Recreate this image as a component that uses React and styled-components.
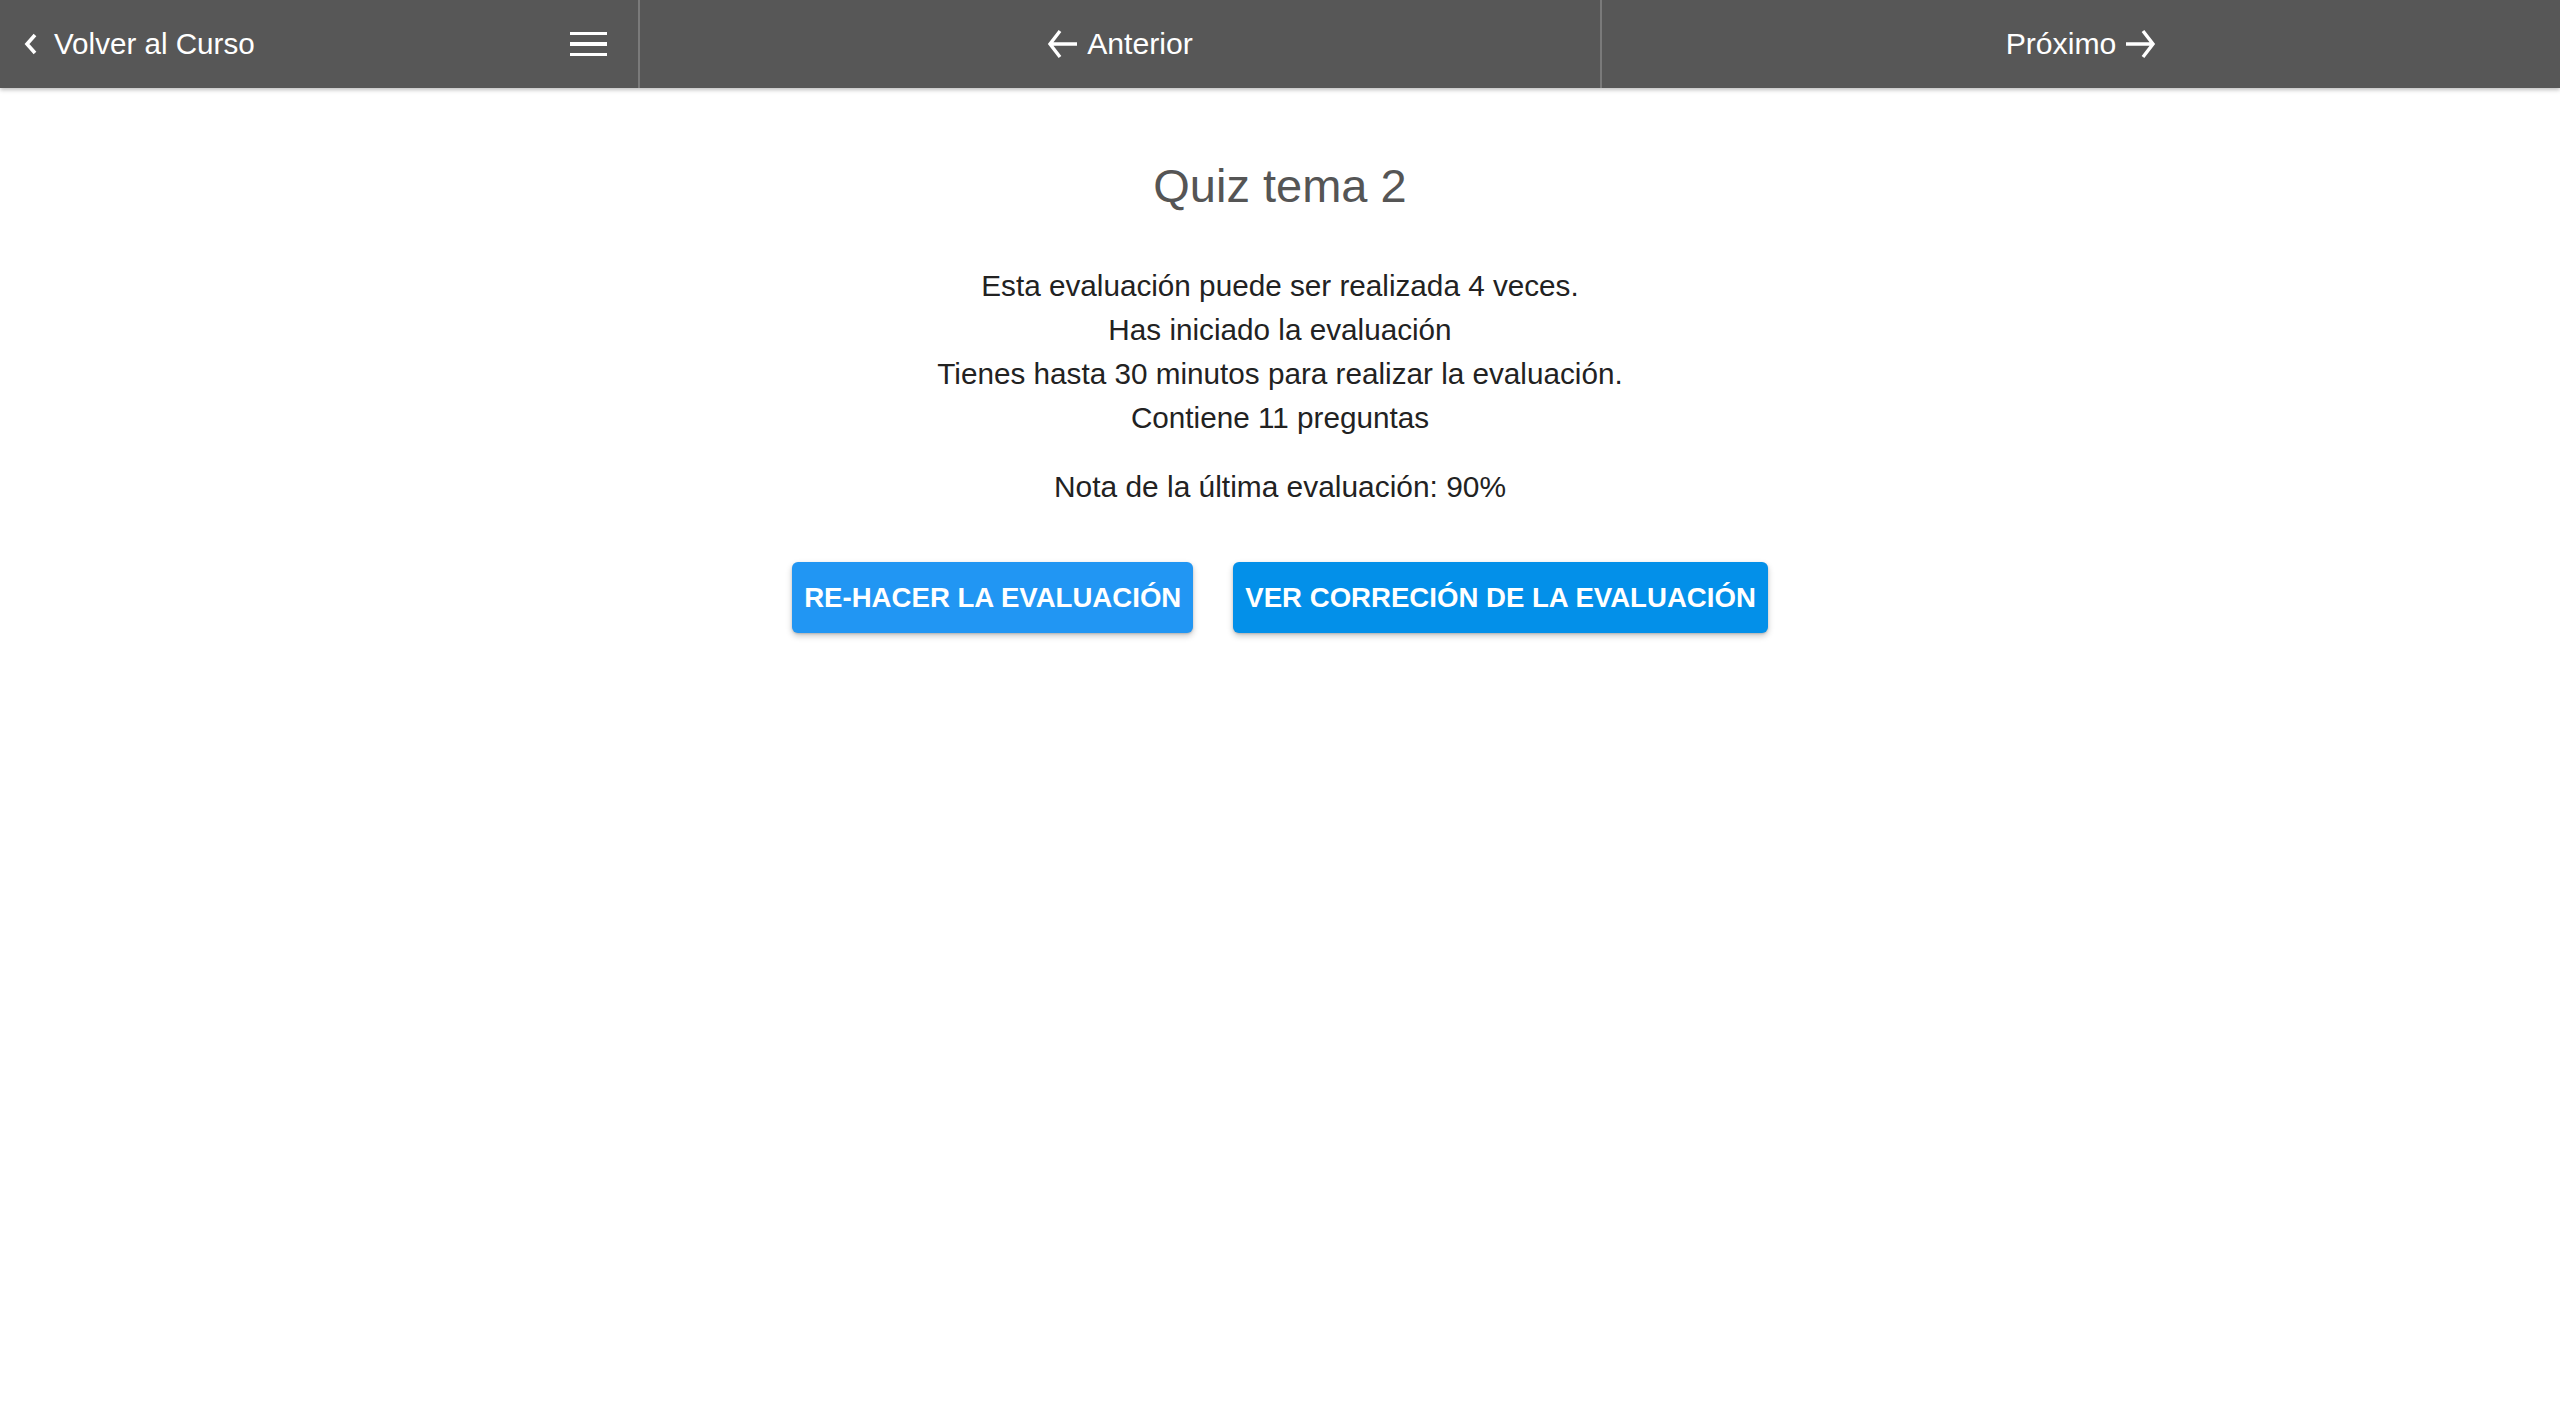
import React from "react";
import styled, { createGlobalStyle } from "styled-components";

const GlobalStyle = createGlobalStyle`
	html, body {
		margin: 0;
		padding: 0;
		background: #ffffff;
		font-family: "Liberation Sans", Arial, sans-serif;
	}
`;

const Page = styled.div`
	min-height: 1416px;
	background: #fff;
`;

const TopBar = styled.nav`
	display: grid;
	grid-template-columns: 638px 962px 1fr;
	height: 88px;
	background: #575757;
	box-shadow: 0 2px 4px rgba(0, 0, 0, 0.25);
	color: #fff;
`;

const NavCell = styled.div`
	display: flex;
	align-items: center;
	justify-content: ${(p) => p.$justify || "center"};
	padding: ${(p) => p.$pad || "0"};
	border-left: ${(p) => (p.$divider ? "2px solid #7a7a7a" : "none")};
	font-size: 30.2px;
	gap: 8px;
`;

const BackLink = styled.div`
	display: flex;
	align-items: center;
	gap: 14px;
	font-size: 29.6px;
`;

const Menu = styled.div`
	display: flex;
	flex-direction: column;
	gap: 7px;
	width: 37px;

	span {
		display: block;
		height: 3.5px;
		background: #fff;
	}
`;

const Main = styled.main`
	display: flex;
	flex-direction: column;
	align-items: center;
	padding-top: 70px;
	color: #222;
	text-align: center;
`;

const Title = styled.h1`
	margin: 0;
	font-size: 47px;
	line-height: 56px;
	font-weight: 400;
	color: #555;
`;

const Info = styled.div`
	margin-top: 50px;
	font-size: 29.7px;
	line-height: 44px;
`;

const Grade = styled.p`
	margin: 25px 0 0;
	font-size: 29.9px;
	line-height: 44px;
`;

const Actions = styled.div`
	display: flex;
	gap: 40px;
	margin-top: 53px;
`;

const Button = styled.button`
	height: 71px;
	padding: 0 12px;
	border: none;
	border-radius: 6px;
	background: ${(p) => p.$bg};
	color: #fff;
	font-family: "Liberation Sans", Arial, sans-serif;
	font-size: 27.6px;
	font-weight: 700;
	text-transform: uppercase;
	box-shadow: 0 3px 6px rgba(0, 0, 0, 0.22), 0 1px 2px rgba(0, 0, 0, 0.15);
	cursor: pointer;
`;

const Chevron = () => (
	<svg width="18" height="24" viewBox="0 0 18 24">
		<path d="M13 3 L5 12 L13 21" fill="none" stroke="#fff" strokeWidth="3.6" />
	</svg>
);

const Arrow = ({ dir }) => (
	<svg
		width="32"
		height="30"
		viewBox="0 0 32 30"
		style={{ transform: dir === "right" ? "scaleX(-1)" : "none" }}
	>
		<path d="M30 15 H4 M13 2 L3 15 L13 28" fill="none" stroke="#fff" strokeWidth="3.4" />
	</svg>
);

export default function App() {
	return (
		<Page>
			<GlobalStyle />
			<TopBar>
				<NavCell $justify="space-between" $pad="0 31px 0 22px">
					<BackLink>
						<Chevron />
						Volver al Curso
					</BackLink>
					<Menu>
						<span />
						<span />
						<span />
					</Menu>
				</NavCell>
				<NavCell $divider>
					<Arrow dir="left" />
					Anterior
				</NavCell>
				<NavCell $divider>
					Próximo
					<Arrow dir="right" />
				</NavCell>
			</TopBar>
			<Main>
				<Title>Quiz tema 2</Title>
				<Info>
					<div>Esta evaluación puede ser realizada 4 veces.</div>
					<div>Has iniciado la evaluación</div>
					<div>Tienes hasta 30 minutos para realizar la evaluación.</div>
					<div>Contiene 11 preguntas</div>
				</Info>
				<Grade>Nota de la última evaluación: 90%</Grade>
				<Actions>
					<Button $bg="#2196f3">Re-hacer la evaluación</Button>
					<Button $bg="#0390e9">Ver correción de la evaluación</Button>
				</Actions>
			</Main>
		</Page>
	);
}
